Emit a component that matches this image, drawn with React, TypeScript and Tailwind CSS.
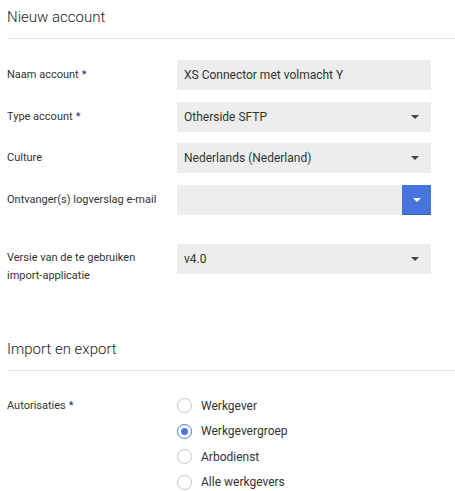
import React from "react";

const Caret = ({ color = "#444" }: { color?: string }) => (
  <svg width="8" height="4" viewBox="0 0 8 4" className="block">
    <path d="M0 0 L8 0 L4 4 Z" fill={color} />
  </svg>
);

const Star = () => <span className="text-[#1a2a6c] ml-[3px]">*</span>;

const Field = ({ children, caret }: { children?: React.ReactNode; caret?: boolean }) => (
  <div className="h-[30px] w-[254px] bg-[#ededed] flex items-center pl-[7px] pr-[12px] text-[12px] text-[#333]">
    <span className="flex-1">{children}</span>
    {caret && <Caret />}
  </div>
);

const Radio = ({ label, checked }: { label: string; checked?: boolean }) => (
  <div className="flex items-center h-[25.5px]">
    <span
      className={
        checked
          ? "w-[15px] h-[15px] rounded-full border-[1.5px] border-[#4a76de] flex items-center justify-center"
          : "w-[15px] h-[15px] rounded-full border-[1.5px] border-[#c4c4c4]"
      }
    >
      {checked && <span className="w-[7px] h-[7px] rounded-full bg-[#4a76de]" />}
    </span>
    <span className="ml-[9px] text-[12px] text-[#333]">{label}</span>
  </div>
);

export default function App() {
  return (
    <div className="w-[455px] h-[491px] bg-white overflow-hidden pl-[7px]" style={{ fontFamily: "Roboto, sans-serif" }}>
      <div className="pt-[6px] h-[38px] text-[15px] font-light text-[#222] leading-[22px]">
        Nieuw account
      </div>
      <div className="h-px bg-[#e8e8e8]" />

      <div className="mt-[21px] flex items-center">
        <div className="w-[170px] text-[11px] text-[#333]">Naam account<Star /></div>
        <Field>XS Connector met volmacht Y</Field>
      </div>
      <div className="mt-[12px] flex items-center">
        <div className="w-[170px] text-[11px] text-[#333]">Type account<Star /></div>
        <Field caret>Otherside SFTP</Field>
      </div>
      <div className="mt-[11px] flex items-center">
        <div className="w-[170px] text-[11px] text-[#333]">Culture</div>
        <Field caret>Nederlands (Nederland)</Field>
      </div>
      <div className="mt-[12px] flex items-center">
        <div className="w-[170px] text-[11px] text-[#333]">Ontvanger(s) logverslag e-mail</div>
        <div className="h-[30px] w-[254px] bg-[#ededed] flex justify-end">
          <div className="w-[29px] h-[30px] bg-[#4674dc] border-b-[1.5px] border-[#3a60b8] flex items-center justify-center">
            <Caret color="#fff" />
          </div>
        </div>
      </div>
      <div className="mt-[29px] flex items-start">
        <div className="w-[170px] text-[11px] text-[#333] leading-[18px] pt-[5px]">
          Versie van de te gebruiken
          <br />
          import-applicatie
        </div>
        <Field caret>v4.0</Field>
      </div>

      <div className="mt-[53px] h-[30px] text-[15px] font-light text-[#222] leading-[22px]">
        Import en export
      </div>
      <div className="mt-[2px] h-px bg-[#e8e8e8]" />

      <div className="mt-[22px] flex items-start">
        <div className="w-[170px] text-[11px] text-[#333] leading-[25.5px]">Autorisaties<Star /></div>
        <div className="flex flex-col">
          <Radio label="Werkgever" />
          <Radio label="Werkgevergroep" checked />
          <Radio label="Arbodienst" />
          <Radio label="Alle werkgevers" />
        </div>
      </div>
    </div>
  );
}
